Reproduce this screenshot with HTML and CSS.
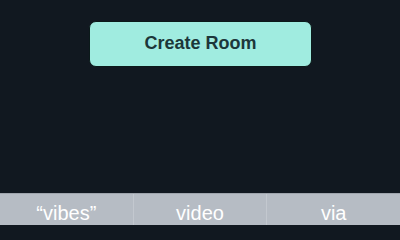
FILE: index.html
```html
<!DOCTYPE html>
<html>
<head>
<meta charset="utf-8">
<link rel="stylesheet" href="styles.css">
</head>
<body>
<div class="screen">
  <main class="content">
    <button class="create">Create Room</button>
  </main>
  <div class="suggestions">
    <div class="sugg">“vibes”</div>
    <div class="sugg">video</div>
    <div class="sugg">via</div>
  </div>
</div>
</body>
</html>
```
FILE: styles.css
```css
html, body {
  margin: 0;
  padding: 0;
  width: 400px;
  height: 225px;
  overflow: hidden;
  background: #111820;
}
.screen {
  display: flex;
  flex-direction: column;
  height: 226px;
  overflow: hidden;
}
.content {
  flex: 1;
  display: flex;
  justify-content: center;
  align-items: flex-start;
  padding-top: 21px;
}
.create {
  width: 223px;
  height: 46px;
  margin-left: 1px;
  border: 1px solid #0b1a1a;
  border-radius: 7px;
  background: #a0ece0;
  color: #1c373a;
  font-family: "Liberation Sans", Arial, sans-serif;
  font-weight: bold;
  font-size: 18px;
  padding: 0 0 1px 0;
}
.suggestions {
  flex: 0 0 33px;
  display: flex;
  background: #b6bcc4;
  border-top: 1px solid #9ea4ac;
  box-sizing: border-box;
  overflow: hidden;
}
.sugg {
  flex: 1;
  display: flex;
  align-items: flex-start;
  justify-content: center;
  color: #ffffff;
  font-family: "Liberation Sans", Arial, sans-serif;
  font-size: 20px;
  line-height: 23px;
  padding-top: 8px;
}
.sugg + .sugg {
  border-left: 1px solid #c3c8cf;
}
```
